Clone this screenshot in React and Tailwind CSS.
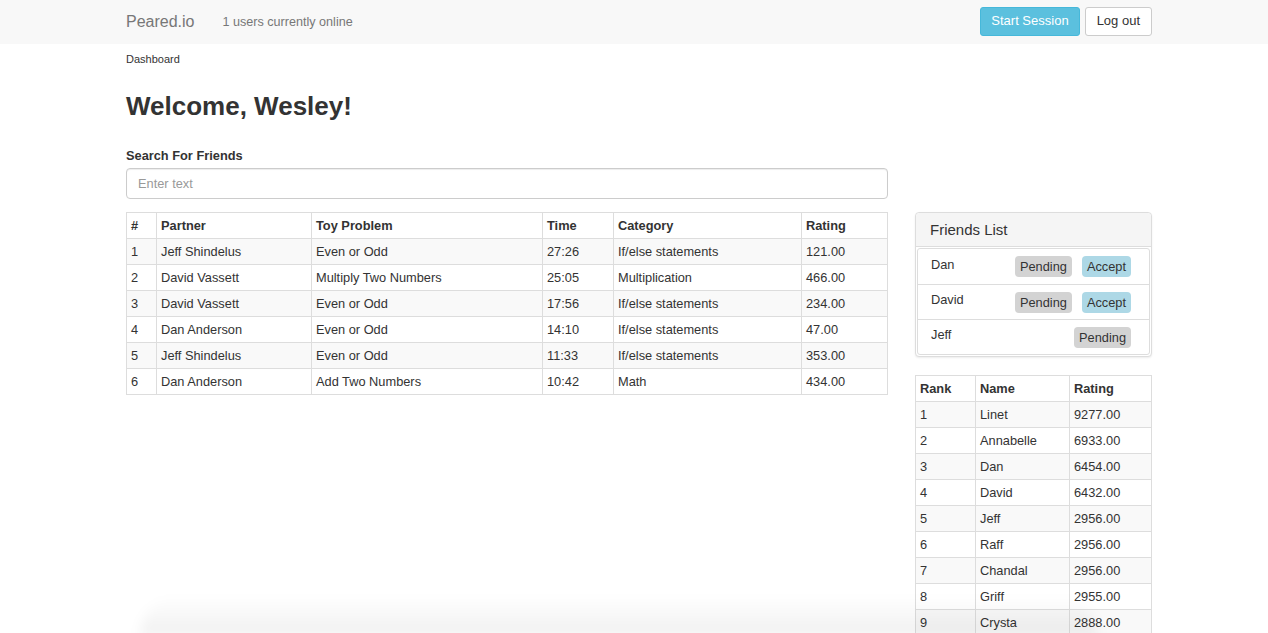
import React from "react";

const games = [
  ["1", "Jeff Shindelus", "Even or Odd", "27:26", "If/else statements", "121.00"],
  ["2", "David Vassett", "Multiply Two Numbers", "25:05", "Multiplication", "466.00"],
  ["3", "David Vassett", "Even or Odd", "17:56", "If/else statements", "234.00"],
  ["4", "Dan Anderson", "Even or Odd", "14:10", "If/else statements", "47.00"],
  ["5", "Jeff Shindelus", "Even or Odd", "11:33", "If/else statements", "353.00"],
  ["6", "Dan Anderson", "Add Two Numbers", "10:42", "Math", "434.00"],
];

const leaders = [
  ["1", "Linet", "9277.00"],
  ["2", "Annabelle", "6933.00"],
  ["3", "Dan", "6454.00"],
  ["4", "David", "6432.00"],
  ["5", "Jeff", "2956.00"],
  ["6", "Raff", "2956.00"],
  ["7", "Chandal", "2956.00"],
  ["8", "Griff", "2955.00"],
  ["9", "Crysta", "2888.00"],
];

const friends = [
  { name: "Dan", accept: true },
  { name: "David", accept: true },
  { name: "Jeff", accept: false },
];

const cell = "border border-[#ddd] px-[4px] py-[4px] leading-[17px] text-left align-top";

function Table({ cols, rows }) {
  return (
    <table className="w-full border-collapse border border-[#ddd] text-[12.8px] text-[#333]">
      <thead>
        <tr>
          {cols.map(([label, w]) => (
            <th key={label} className={cell + " font-bold " + w}>{label}</th>
          ))}
        </tr>
      </thead>
      <tbody>
        {rows.map((r, i) => (
          <tr key={i} className={i % 2 === 0 ? "bg-[#f9f9f9]" : "bg-white"}>
            {r.map((v, j) => (
              <td key={j} className={cell}>{v}</td>
            ))}
          </tr>
        ))}
      </tbody>
    </table>
  );
}

export default function App() {
  return (
    <div className="relative min-h-[633px] overflow-hidden bg-white text-[#333]" style={{ fontFamily: '"Liberation Sans", Arial, sans-serif' }}>
      {/* navbar */}
      <div className="h-[44px] bg-[#f8f8f8]">
        <div className="flex h-full items-center pl-[126px] w-[1152px]">
          <span className="text-[16px] text-[#777]">Peared.io</span>
          <span className="ml-[28px] text-[12.6px] text-[#777]">1 users currently online</span>
          <div className="ml-auto -mt-[2px] flex gap-[5px]">
            <button className="h-[29px] rounded-[3px] border border-[#46b8da] bg-[#5bc0de] px-[10px] text-[13px] text-white">Start Session</button>
            <button className="h-[29px] rounded-[3px] border border-[#ccc] bg-white px-[11px] text-[13px] text-[#333]">Log out</button>
          </div>
        </div>
      </div>

      <div className="pl-[126px] w-[1152px]">
        <div className="mt-[8px] text-[11px] leading-[14px]">Dashboard</div>
        <h1 className="mt-[23px] text-[26px] font-bold leading-[34px]">Welcome, Wesley!</h1>

        <div className="w-[762px]">
          <label className="mt-[25px] block text-[12.8px] font-bold leading-[16px]">Search For Friends</label>
          <input
            placeholder="Enter text"
            className="mt-[4px] h-[31px] w-full rounded-[4px] border border-[#ccc] px-[11px] text-[12.8px] shadow-[inset_0_1px_1px_rgba(0,0,0,0.075)] outline-none placeholder:text-[#999]"
          />
        </div>

        <div className="mt-[13px] flex gap-[27px]">
          <div className="w-[762px]">
            <Table
              cols={[["#", "w-[30px]"], ["Partner", "w-[155px]"], ["Toy Problem", "w-[231px]"], ["Time", "w-[71px]"], ["Category", "w-[188px]"], ["Rating", ""]]}
              rows={games}
            />
          </div>

          <div className="w-[237px]">
            <div className="rounded-[4px] border border-[#ddd] bg-white shadow-[0_1px_2px_rgba(0,0,0,0.08)]">
              <div className="h-[34px] border-b border-[#ddd] bg-[#f5f5f5] px-[14px] pt-[8px] text-[15px] leading-[18px] rounded-t-[4px]">Friends List</div>
              <div className="m-px border border-[#ddd] rounded-[3px]">
                {friends.map((f, i) => (
                  <div key={f.name} className={"flex h-[35px] items-center pl-[13px] pr-[18px] text-[12.8px] " + (i > 0 ? "border-t border-[#ddd]" : "")}>
                    <span className="-mt-[4px]">{f.name}</span>
                    <div className="ml-auto flex gap-[10px]">
                      <span className="rounded-[4px] bg-[#d3d3d3] px-[5px] leading-[21px]">Pending</span>
                      {f.accept && <span className="rounded-[4px] bg-[#add8e6] px-[5px] leading-[21px]">Accept</span>}
                    </div>
                  </div>
                ))}
              </div>
            </div>

            <div className="mt-[18px]">
              <Table cols={[["Rank", "w-[60px]"], ["Name", "w-[94px]"], ["Rating", ""]]} rows={leaders} />
            </div>
          </div>
        </div>
      </div>

      {/* window shadow at the bottom of the capture */}
      <div className="pointer-events-none absolute bottom-0 left-[140px] right-[170px] h-[40px] bg-gradient-to-b from-transparent to-black/[0.06] rounded-t-[40px] blur-[6px]" />
    </div>
  );
}
